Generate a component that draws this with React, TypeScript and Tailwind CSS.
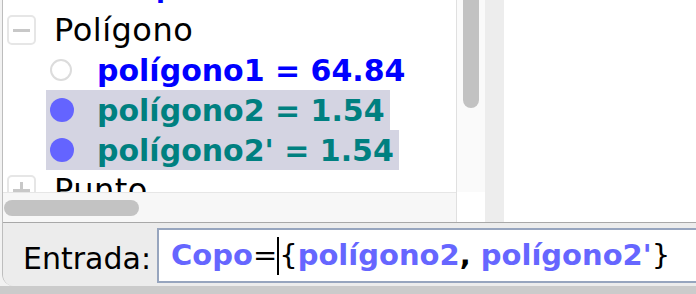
import React from 'react';

const font = "font-['DejaVu_Sans',sans-serif]";

function Row({ children, className = '' }: { children: React.ReactNode; className?: string }) {
  return <div className={`h-[40px] flex items-center shrink-0 ${className}`}>{children}</div>;
}

export default function App() {
  return (
    <div className={`w-[696px] h-[294px] overflow-hidden bg-[#cbcbcb] ${font}`}>
      <div className="h-[286px] bg-[#f2f2f2] flex">
        <div className="ml-[2px] flex-1 flex flex-col border-l border-[#bdbdbd] rounded-bl-[12px] bg-[#ececec] overflow-hidden">
          {/* top area: tree + scrollbars + right view */}
          <div className="h-[222px] flex shrink-0">
            <div className="w-[453px] flex flex-col">
              <div className="h-[192px] bg-white overflow-hidden flex flex-col">
                <Row className="-mt-[30px] pl-[153px]">
                  <span className="text-[26px] font-bold text-[#0000ff] leading-none translate-y-[-2px]">p</span>
                </Row>
                <Row>
                  <div className="ml-[4px] w-[29px] h-[30px] rounded-[5px] border-2 border-[#e6e6e6] flex items-center justify-center">
                    <div className="w-[17px] h-[3px] bg-[#c8c8c8]" />
                  </div>
                  <span className="ml-[18px] text-[32px] tracking-[0.5px] text-black">Polígono</span>
                </Row>
                <Row>
                  <div className="ml-[47px] w-[22px] h-[22px] rounded-full border-2 border-[#dcdcdc] bg-white" />
                  <span className="ml-[25px] text-[30px] font-bold text-[#0000ff]">polígono1 = 64.84</span>
                </Row>
                <Row>
                  <div className="ml-[43px] h-[40px] flex items-center bg-[#d4d4e2] pr-[5px]">
                    <div className="ml-[4px] w-[24px] h-[24px] rounded-full bg-[#6464ff]" />
                    <span className="ml-[23px] text-[30px] font-bold text-[#008080]">polígono2 = 1.54</span>
                  </div>
                </Row>
                <Row>
                  <div className="ml-[43px] h-[40px] flex items-center bg-[#d4d4e2] pr-[5px]">
                    <div className="ml-[4px] w-[24px] h-[24px] rounded-full bg-[#6464ff]" />
                    <span className="ml-[23px] text-[30px] font-bold text-[#008080]">polígono2' = 1.54</span>
                  </div>
                </Row>
                <Row>
                  <div className="ml-[4px] w-[29px] h-[30px] rounded-[5px] border-2 border-[#e6e6e6] flex items-center justify-center relative">
                    <div className="w-[17px] h-[3px] bg-[#c8c8c8]" />
                    <div className="absolute w-[3px] h-[17px] bg-[#c8c8c8]" />
                  </div>
                  <span className="ml-[18px] text-[32px] tracking-[0.5px] text-black">Punto</span>
                </Row>
              </div>
              <div className="h-[30px] bg-[#f7f7f7] border-t border-[#e6e6e6] flex items-center px-[1px]">
                <div className="w-[135px] h-[16px] rounded-full bg-[#c3c3c3]" />
              </div>
            </div>
            <div className="w-[29px] flex flex-col border-l border-[#e0e0e0]">
              <div className="h-[192px] bg-[#fafafa] flex justify-center">
                <div className="w-[16px] h-[108px] rounded-b-full bg-[#c2c2c2]" />
              </div>
              <div className="h-[30px] bg-white" />
            </div>
            <div className="w-[19px] bg-[#ededed]" />
            <div className="flex-1 bg-white" />
          </div>
          {/* input bar */}
          <div className="flex-1 border-t border-[#a8a8a8] bg-[#ececec] flex items-start pt-[5px]">
            <span className="ml-[20px] mt-[8px] text-[30px] text-black w-[134px] shrink-0">Entrada:</span>
            <div className="h-[55px] w-[560px] shrink-0 bg-white border-2 border-[#97a5be] flex items-center pl-[12px] text-[29px] font-bold whitespace-nowrap">
              <span className="text-[#6666ff]">Copo</span>
              <span className="text-black font-normal">=</span>
              <span className="w-[2px] h-[38px] bg-black" />
              <span className="text-black font-normal">{'{'}</span>
              <span className="text-[#6666ff]">polígono2</span>
              <span className="text-black">,&nbsp;</span>
              <span className="text-[#6666ff]">polígono2'</span>
              <span className="text-black font-normal">{'}'}</span>
            </div>
          </div>
        </div>
      </div>
    </div>
  );
}
